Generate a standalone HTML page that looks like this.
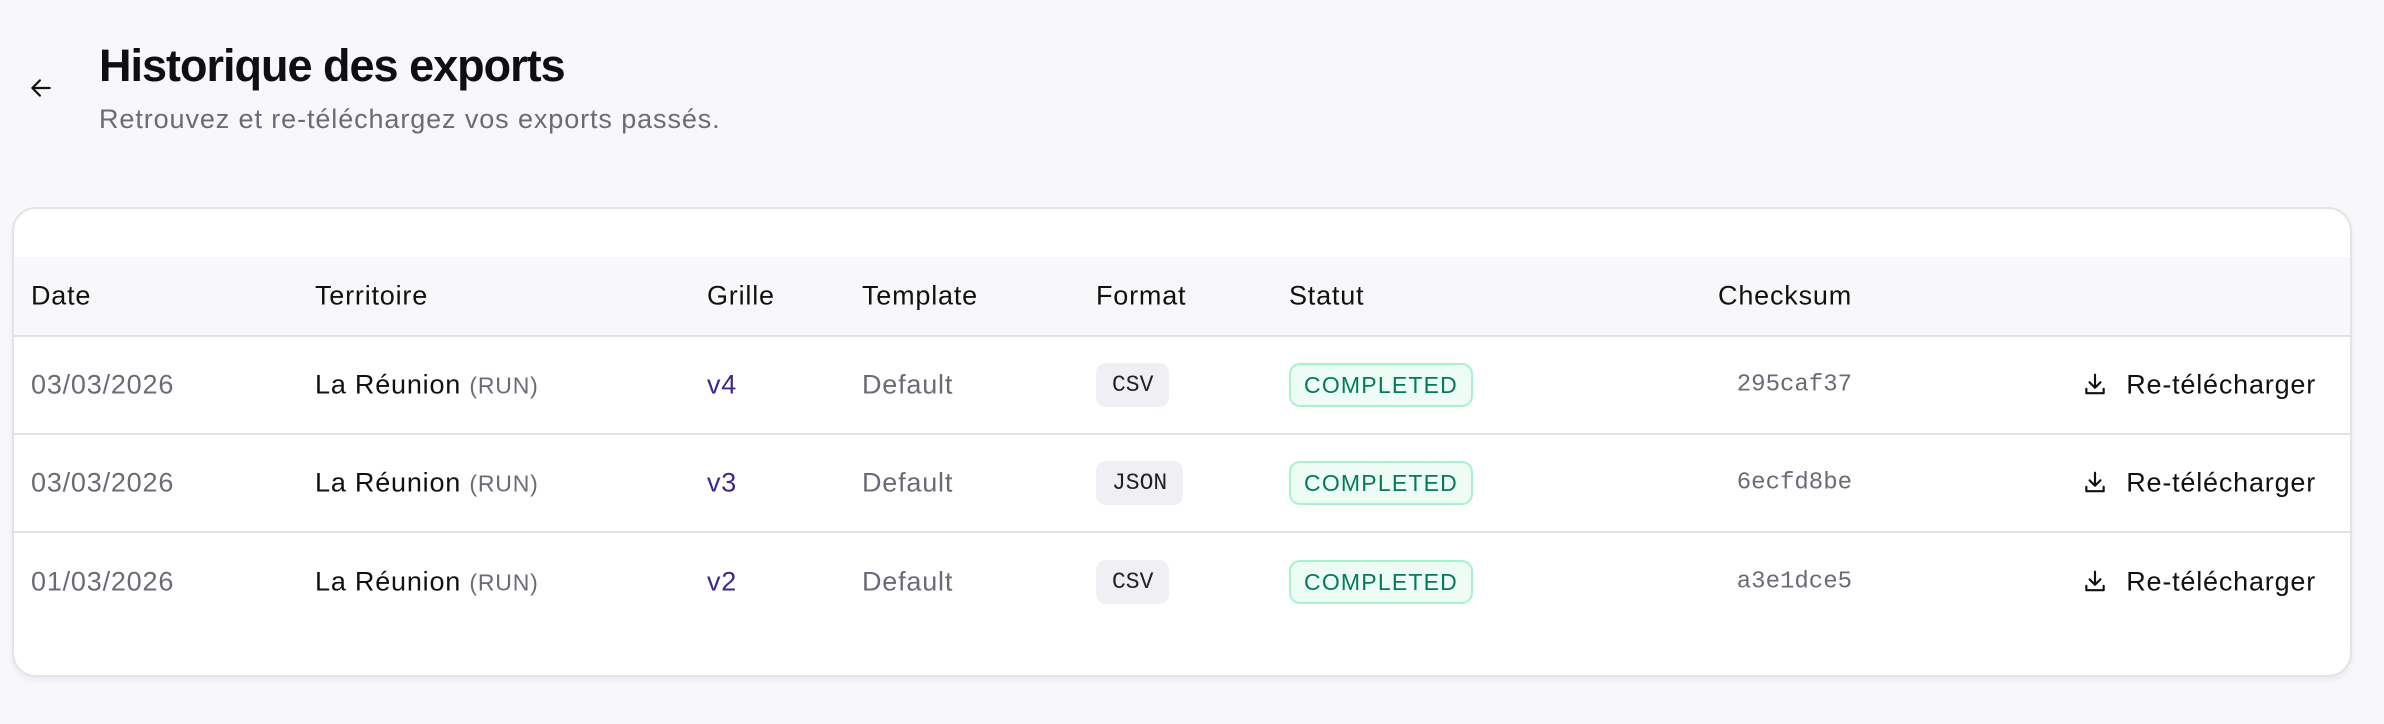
<!DOCTYPE html>
<html><head><meta charset="utf-8"><style>
*{box-sizing:border-box;margin:0;padding:0}
body{width:2384px;height:724px;background:#f8f8fa;font-family:"Liberation Sans",sans-serif;position:relative;overflow:hidden;color:#111}
.abs{position:absolute;white-space:nowrap}
.title{left:99px;top:40px;font-size:45px;font-weight:bold;letter-spacing:-1px;color:#0f0f12}
.sub{left:99px;top:104px;font-size:27px;letter-spacing:0.9px;color:#6b6b76}
.card{position:absolute;left:12px;top:207px;width:2340px;height:470px;background:#fff;border:2px solid #e4e4e8;border-radius:24px;box-shadow:0 3px 6px rgba(0,0,0,.06);overflow:hidden}
.head{position:absolute;left:0;top:48px;width:100%;height:80px;background:#f8f8fa;border-bottom:2px solid #e2e2e6}
.row{position:absolute;left:0;width:100%;height:98px;border-bottom:2px solid #e2e2e6}
.c{position:absolute;top:50%;transform:translateY(-50%);font-size:27px;letter-spacing:0.8px;white-space:nowrap}
.h{color:#111}
.g{color:#6b6b76}
.v{color:#3b2a8a}
.mono{font-family:"Liberation Mono",monospace;letter-spacing:0}
.fmt{background:#efeff4;border-radius:10px;height:44px;line-height:44px;padding:0 16px;font-size:23px;color:#222}
.st{background:#edfdf5;border:2px solid #a7f1cd;border-radius:11px;height:44px;line-height:40px;width:184px;text-align:center;font-size:23px;color:#047a56;letter-spacing:1.2px}
.ck{right:498px;font-size:24px;color:#6b6b76}
.dl{right:34px;color:#111}
.dl svg{vertical-align:-4px;margin-right:18px}
</style></head><body>
<svg class="abs" style="left:28px;top:75px" width="26" height="26" viewBox="0 0 24 24" fill="none" stroke="#111" stroke-width="2" stroke-linecap="round" stroke-linejoin="round"><path d="M20 12H4M11 5l-7 7 7 7"/></svg>
<div class="abs title">Historique des exports</div>
<div class="abs sub">Retrouvez et re-téléchargez vos exports passés.</div>
<div class="card">
 <div class="head">
  <div class="c h" style="left:17px">Date</div>
  <div class="c h" style="left:301px">Territoire</div>
  <div class="c h" style="left:693px">Grille</div>
  <div class="c h" style="left:848px">Template</div>
  <div class="c h" style="left:1082px">Format</div>
  <div class="c h" style="left:1275px">Statut</div>
  <div class="c h" style="right:498px">Checksum</div>
 </div>
 <div class="row" style="top:128px">
  <div class="c g" style="left:17px">03/03/2026</div>
  <div class="c" style="left:301px">La Réunion <span class="g" style="font-size:23px">(RUN)</span></div>
  <div class="c v" style="left:693px">v4</div>
  <div class="c g" style="left:848px">Default</div>
  <div class="c mono fmt" style="left:1082px">CSV</div>
  <div class="c st" style="left:1275px">COMPLETED</div>
  <div class="c mono ck">295caf37</div>
  <div class="c dl"><svg width="26" height="26" viewBox="0 0 24 24" fill="none" stroke="#111" stroke-width="2" stroke-linecap="round" stroke-linejoin="round"><path d="M12 3v12M7 10l5 5 5-5M4 16v4h16v-4"/></svg>Re-télécharger</div>
 </div>
 <div class="row" style="top:226px">
  <div class="c g" style="left:17px">03/03/2026</div>
  <div class="c" style="left:301px">La Réunion <span class="g" style="font-size:23px">(RUN)</span></div>
  <div class="c v" style="left:693px">v3</div>
  <div class="c g" style="left:848px">Default</div>
  <div class="c mono fmt" style="left:1082px">JSON</div>
  <div class="c st" style="left:1275px">COMPLETED</div>
  <div class="c mono ck">6ecfd8be</div>
  <div class="c dl"><svg width="26" height="26" viewBox="0 0 24 24" fill="none" stroke="#111" stroke-width="2" stroke-linecap="round" stroke-linejoin="round"><path d="M12 3v12M7 10l5 5 5-5M4 16v4h16v-4"/></svg>Re-télécharger</div>
 </div>
 <div class="row" style="top:324px;border-bottom:none">
  <div class="c g" style="left:17px">01/03/2026</div>
  <div class="c" style="left:301px">La Réunion <span class="g" style="font-size:23px">(RUN)</span></div>
  <div class="c v" style="left:693px">v2</div>
  <div class="c g" style="left:848px">Default</div>
  <div class="c mono fmt" style="left:1082px">CSV</div>
  <div class="c st" style="left:1275px">COMPLETED</div>
  <div class="c mono ck">a3e1dce5</div>
  <div class="c dl"><svg width="26" height="26" viewBox="0 0 24 24" fill="none" stroke="#111" stroke-width="2" stroke-linecap="round" stroke-linejoin="round"><path d="M12 3v12M7 10l5 5 5-5M4 16v4h16v-4"/></svg>Re-télécharger</div>
 </div>
</div>
</body></html>
